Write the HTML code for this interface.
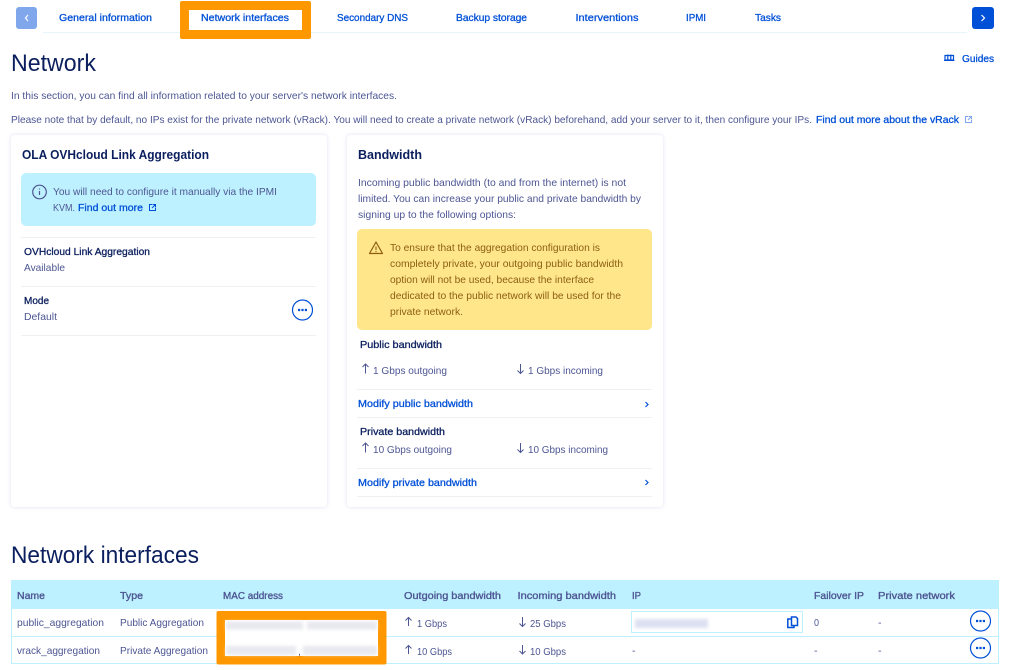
<!DOCTYPE html>
<html><head><meta charset="utf-8"><title>Network</title>
<style>
html,body{margin:0;padding:0;background:#fff;width:1021px;height:670px;overflow:hidden}
svg{display:block}
text{font-family:"Liberation Sans",sans-serif;font-size:10.5px;fill:#4d5693}
.l{fill:#0050d7;stroke:#0050d7;stroke-width:.3px}
.b{fill:#0b1f5e;stroke:#0b1f5e;stroke-width:.3px}
.h{fill:#4d5693;stroke:#4d5693;stroke-width:.35px}
.t{fill:#0b1f5e;font-weight:bold;font-size:12.5px}
.h1{fill:#0b1f5e;font-size:24px}
.y{fill:#8c5f14}
.ic{fill:none;stroke:#0050d7;stroke-width:1.2}
.ar{fill:none;stroke:#4d5693;stroke-width:1}
</style></head><body>
<svg width="1021" height="670" viewBox="0 0 1021 670" xmlns="http://www.w3.org/2000/svg">
<defs>
<filter id="f" x="-15%" y="-80%" width="130%" height="260%"><feGaussianBlur stdDeviation="1.6"/></filter>
<filter id="s" x="-5%" y="-5%" width="110%" height="110%"><feDropShadow dx="0" dy="0" stdDeviation="2" flood-color="#b4b8e0" flood-opacity=".45"/></filter>
</defs>
<rect x="43" y="32" width="924" height="1" fill="#e6f5fc"/>
<rect x="16" y="7" width="21" height="22" rx="3" fill="#80a7eb"/>
<path d="M28 15l-2.500 3 2.500 3" fill="none" stroke="#fff" stroke-width="1.200"/>
<rect x="972" y="7" width="22" height="22" rx="3" fill="#0050d7"/>
<path d="M981.500 15l3 3-3 3" fill="none" stroke="#fff" stroke-width="1.200"/>
<rect x="180" y="1" width="131" height="38" rx="2" fill="#ff9800"/>
<rect x="189" y="10" width="113" height="20" fill="#fff"/>
<text class="l" x="59" y="21" textLength="93" lengthAdjust="spacingAndGlyphs">General information</text>
<text class="l" x="201" y="21" textLength="88" lengthAdjust="spacingAndGlyphs">Network interfaces</text>
<text class="l" x="337" y="21" textLength="71" lengthAdjust="spacingAndGlyphs">Secondary DNS</text>
<text class="l" x="456" y="21" textLength="71" lengthAdjust="spacingAndGlyphs">Backup storage</text>
<text class="l" x="575.500" y="21" textLength="63" lengthAdjust="spacingAndGlyphs">Interventions</text>
<text class="l" x="686" y="21" textLength="20" lengthAdjust="spacingAndGlyphs">IPMI</text>
<text class="l" x="755" y="21" textLength="26" lengthAdjust="spacingAndGlyphs">Tasks</text>

<text class="h1" x="11" y="71" textLength="85" lengthAdjust="spacingAndGlyphs">Network</text>
<path d="M945 55.500h8.500v4.500h-8.500zM947.800 54.500v6M950.800 54.500v6" fill="none" stroke="#0050d7" stroke-width="1.200"/>
<path d="M944 60.500h10.500" stroke="#0050d7" stroke-width="1"/>
<text class="l" x="962" y="62" textLength="32" lengthAdjust="spacingAndGlyphs">Guides</text>

<text x="11" y="99" textLength="386" lengthAdjust="spacingAndGlyphs">In this section, you can find all information related to your server's network interfaces.</text>
<text x="11" y="123" textLength="801" lengthAdjust="spacingAndGlyphs">Please note that by default, no IPs exist for the private network (vRack). You will need to create a private network (vRack) beforehand, add your server to it, then configure your IPs.</text>
<text class="l" x="816" y="123" textLength="143" lengthAdjust="spacingAndGlyphs">Find out more about the vRack</text>
<path d="M968 116.500h-2.500v6h6v-2.500M968.500 116.500h3v3M971.500 116.500l-3.500 3.500" fill="none" stroke="#7fa7eb" stroke-width="1"/>

<rect x="11" y="135" width="316" height="372" rx="4" fill="#fff" filter="url(#s)"/>
<text class="t" x="22" y="159" textLength="187" lengthAdjust="spacingAndGlyphs">OLA OVHcloud Link Aggregation</text>
<rect x="21" y="173" width="295" height="53" rx="5" fill="#bef1ff"/>
<circle cx="39.500" cy="192" r="6.800" fill="none" stroke="#4d5693" stroke-width="1.200"/>
<path d="M39.500 188.500v1M39.500 191v4" stroke="#4d5693" stroke-width="1.200"/>
<text x="53" y="195" textLength="224" lengthAdjust="spacingAndGlyphs">You will need to configure it manually via the IPMI</text>
<text x="53" y="211" textLength="22" lengthAdjust="spacingAndGlyphs">KVM.</text>
<text class="l" x="78" y="211" textLength="65" lengthAdjust="spacingAndGlyphs">Find out more</text>
<path d="M152 204.500h-2.500v6h6v-2.500M152.500 204.500h3v3M155.500 204.500l-3.500 3.500" fill="none" stroke="#0050d7" stroke-width="1"/>
<rect x="21" y="237" width="295" height="1" fill="#eef0f4"/>
<rect x="21" y="286" width="295" height="1" fill="#eef0f4"/>
<rect x="21" y="335" width="295" height="1" fill="#eef0f4"/>
<text class="b" x="24" y="255" textLength="126" lengthAdjust="spacingAndGlyphs">OVHcloud Link Aggregation</text>
<text x="24" y="271" textLength="41" lengthAdjust="spacingAndGlyphs">Available</text>
<text class="b" x="24" y="304" textLength="25" lengthAdjust="spacingAndGlyphs">Mode</text>
<text x="24" y="320" textLength="33" lengthAdjust="spacingAndGlyphs">Default</text>
<circle cx="302.500" cy="310" r="10" fill="#fff" stroke="#0050d7" stroke-width="1.200"/>
<path d="M298 310h2.200M301.400 310h2.200M304.800 310h2.200" stroke="#0050d7" stroke-width="2.200"/>

<rect x="347" y="135" width="316" height="372" rx="4" fill="#fff" filter="url(#s)"/>
<text class="t" x="358" y="159" textLength="64" lengthAdjust="spacingAndGlyphs">Bandwidth</text>
<text x="358" y="186" textLength="268" lengthAdjust="spacingAndGlyphs">Incoming public bandwidth (to and from the internet) is not</text>
<text x="358" y="202" textLength="283" lengthAdjust="spacingAndGlyphs">limited. You can increase your public and private bandwidth by</text>
<text x="358" y="218" textLength="158" lengthAdjust="spacingAndGlyphs">signing up to the following options:</text>
<rect x="357" y="229" width="295" height="101" rx="5" fill="#ffe68a"/>
<path d="M376 242l6.500 11.500h-13z" fill="none" stroke="#8c5f14" stroke-width="1.200" stroke-linejoin="round"/>
<path d="M376 246.500v3.500M376 251v1.200" stroke="#8c5f14" stroke-width="1.100"/>
<text class="y" x="390" y="251" textLength="210" lengthAdjust="spacingAndGlyphs">To ensure that the aggregation configuration is</text>
<text class="y" x="390" y="267" textLength="233" lengthAdjust="spacingAndGlyphs">completely private, your outgoing public bandwidth</text>
<text class="y" x="390" y="283" textLength="204" lengthAdjust="spacingAndGlyphs">option will not be used, because the interface</text>
<text class="y" x="390" y="299" textLength="231" lengthAdjust="spacingAndGlyphs">dedicated to the public network will be used for the</text>
<text class="y" x="390" y="315" textLength="73" lengthAdjust="spacingAndGlyphs">private network.</text>
<text class="b" x="360" y="348" textLength="82" lengthAdjust="spacingAndGlyphs">Public bandwidth</text>
<path class="ar" d="M365.500 373.500v-9.500M362.500 367l3-3 3 3"/>
<text x="373" y="374" textLength="74" lengthAdjust="spacingAndGlyphs">1 Gbps outgoing</text>
<path class="ar" d="M520.500 364v9.500M517.500 370.500l3 3 3-3"/>
<text x="528" y="374" textLength="75" lengthAdjust="spacingAndGlyphs">1 Gbps incoming</text>
<rect x="357" y="389" width="295" height="1" fill="#eef0f4"/>
<text class="l" x="358" y="407" textLength="115" lengthAdjust="spacingAndGlyphs">Modify public bandwidth</text>
<path class="ic" d="M645.500 402l2.500 2.500-2.500 2.500"/>
<rect x="357" y="417" width="295" height="1" fill="#eef0f4"/>
<text class="b" x="360" y="435" textLength="85" lengthAdjust="spacingAndGlyphs">Private bandwidth</text>
<path class="ar" d="M365.500 452.500v-9.500M362.500 446l3-3 3 3"/>
<text x="373" y="453" textLength="79" lengthAdjust="spacingAndGlyphs">10 Gbps outgoing</text>
<path class="ar" d="M520.500 443v9.500M517.500 449.500l3 3 3-3"/>
<text x="528" y="453" textLength="80" lengthAdjust="spacingAndGlyphs">10 Gbps incoming</text>
<rect x="357" y="468" width="295" height="1" fill="#eef0f4"/>
<text class="l" x="358" y="486" textLength="119" lengthAdjust="spacingAndGlyphs">Modify private bandwidth</text>
<path class="ic" d="M645.500 480l2.500 2.500-2.500 2.500"/>
<rect x="357" y="496" width="295" height="1" fill="#eef0f4"/>

<text class="h1" x="11" y="563" textLength="188" lengthAdjust="spacingAndGlyphs">Network interfaces</text>
<rect x="11.500" y="580.500" width="987" height="83" fill="#fff" stroke="#bef1ff"/>
<rect x="11" y="580" width="988" height="29" fill="#bef1ff"/>
<rect x="11" y="636" width="988" height="1" fill="#bef1ff"/>
<text class="h" x="17" y="599" textLength="28" lengthAdjust="spacingAndGlyphs">Name</text>
<text class="h" x="120" y="599" textLength="23" lengthAdjust="spacingAndGlyphs">Type</text>
<text class="h" x="223" y="599" textLength="60" lengthAdjust="spacingAndGlyphs">MAC address</text>
<text class="h" x="404" y="599" textLength="97" lengthAdjust="spacingAndGlyphs">Outgoing bandwidth</text>
<text class="h" x="517.500" y="599" textLength="98.500" lengthAdjust="spacingAndGlyphs">Incoming bandwidth</text>
<text class="h" x="632" y="599" textLength="9" lengthAdjust="spacingAndGlyphs">IP</text>
<text class="h" x="814" y="599" textLength="50" lengthAdjust="spacingAndGlyphs">Failover IP</text>
<text class="h" x="878" y="599" textLength="77" lengthAdjust="spacingAndGlyphs">Private network</text>

<text x="17" y="626" textLength="87" lengthAdjust="spacingAndGlyphs">public_aggregation</text>
<text x="120" y="626" textLength="84" lengthAdjust="spacingAndGlyphs">Public Aggregation</text>
<text x="17" y="654" textLength="83" lengthAdjust="spacingAndGlyphs">vrack_aggregation</text>
<text x="120" y="654" textLength="88" lengthAdjust="spacingAndGlyphs">Private Aggregation</text>

<rect x="216.500" y="611" width="170" height="53.500" rx="2" fill="#ff9800"/>
<rect x="225" y="620" width="153" height="36" fill="#fff"/>
<rect x="226" y="621.500" width="77" height="8" fill="#e8e9ef" filter="url(#f)"/>
<rect x="307" y="621.500" width="70" height="8" fill="#e8e9ef" filter="url(#f)"/>
<rect x="226" y="646" width="70" height="9" fill="#e8e9ef" filter="url(#f)"/>
<rect x="303" y="646" width="74" height="9" fill="#e8e9ef" filter="url(#f)"/>
<text x="298" y="655" font-size="10">,</text>

<path class="ar" d="M408.500 626v-8.500M405.500 620.500l3-3 3 3"/>
<text x="417" y="627" textLength="30" lengthAdjust="spacingAndGlyphs">1 Gbps</text>
<path class="ar" d="M408.500 654v-8.500M405.500 648.500l3-3 3 3"/>
<text x="417" y="655" textLength="35" lengthAdjust="spacingAndGlyphs">10 Gbps</text>
<path class="ar" d="M522.500 617v9.500M519.500 623.500l3 3 3-3"/>
<text x="530" y="627" textLength="36" lengthAdjust="spacingAndGlyphs">25 Gbps</text>
<path class="ar" d="M522.500 645v9M519.500 651l3 3 3-3"/>
<text x="530" y="655" textLength="36" lengthAdjust="spacingAndGlyphs">10 Gbps</text>

<rect x="631.500" y="611.500" width="171" height="21" fill="#fff" stroke="#bef1ff"/>
<rect x="635" y="619" width="73" height="9" fill="#dde0f1" filter="url(#f)"/>
<path d="M791.500 617h4.500l1.500 1.500v7h-6zM791 619h-3.200v8.500h6.200v-2" fill="none" stroke="#0050d7" stroke-width="1.500"/>
<text x="814" y="626" textLength="5" lengthAdjust="spacingAndGlyphs">0</text>
<text x="878" y="626">-</text>
<text x="632" y="654">-</text>
<text x="814" y="654">-</text>
<text x="878" y="654">-</text>
<circle cx="980.500" cy="621" r="10" fill="#fff" stroke="#0050d7" stroke-width="1.200"/>
<path d="M976 621h2.200M979.400 621h2.200M982.800 621h2.200" stroke="#0050d7" stroke-width="2.200"/>
<circle cx="980.500" cy="648" r="10" fill="#fff" stroke="#0050d7" stroke-width="1.200"/>
<path d="M976 648h2.200M979.400 648h2.200M982.800 648h2.200" stroke="#0050d7" stroke-width="2.200"/>
</svg>
</body></html>
